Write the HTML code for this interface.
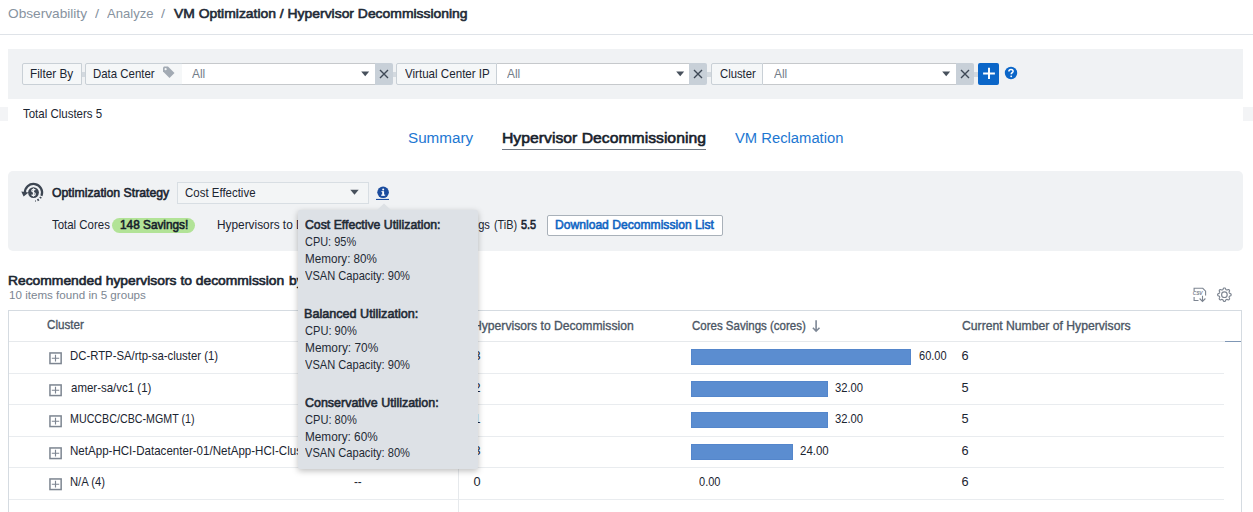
<!DOCTYPE html>
<html><head><meta charset="utf-8"><title>Hypervisor Decommissioning</title>
<style>
html,body{margin:0;padding:0;}
body{width:1253px;height:512px;overflow:hidden;position:relative;background:#fff;font-family:"Liberation Sans",sans-serif;}
.t{position:absolute;white-space:nowrap;transform-origin:0 0;}
.r{position:absolute;}
</style></head><body>
<div class="t" id="bc1" style="left:8.20px;top:5.00px;font-size:13.4px;line-height:17px;color:#8793a0;transform:scaleX(1.0206);">Observability</div>
<div class="t" style="left:95.20px;top:5.00px;font-size:13.4px;line-height:17px;color:#8793a0;transform:scaleX(1.1000);">/</div>
<div class="t" id="bc2" style="left:107.30px;top:5.00px;font-size:13.4px;line-height:17px;color:#8793a0;transform:scaleX(0.9748);">Analyze</div>
<div class="t" style="left:160.50px;top:5.00px;font-size:13.4px;line-height:17px;color:#8793a0;transform:scaleX(1.0750);">/</div>
<div class="t" id="bc3" style="left:174.00px;top:6.00px;font-size:13.2px;line-height:16px;color:#1e2a36;transform:scaleX(1.0541);-webkit-text-stroke:0.6px #1e2a36;">VM Optimization / Hypervisor Decommissioning</div>
<div class="r" style="left:0px;top:34px;width:1253px;height:1px;background:#dfe3e8;"></div>
<div class="r" style="left:8px;top:49px;width:1235px;height:50px;background:#f0f2f4;"></div>
<div class="r" style="left:22px;top:63px;width:60px;height:22px;background:#f5f7f8;border:1px solid #c9d0d6;box-sizing:border-box;border-radius:2px 0 0 2px;"></div>
<div class="t" style="left:30.11px;top:66.00px;font-size:13.2px;line-height:16px;color:#1b2531;transform:scaleX(0.8940);">Filter By</div>
<div class="r" style="left:82px;top:72px;width:3px;height:5px;background:#d3d9df;"></div>
<div class="r" style="left:85px;top:63px;width:98px;height:22px;background:#f5f7f8;border:1px solid #c9d0d6;box-sizing:border-box;border-radius:2px 0 0 2px;"></div>
<div class="t" style="left:93.43px;top:66.00px;font-size:13.2px;line-height:16px;color:#1b2531;transform:scaleX(0.8669);">Data Center</div>
<svg class="r" style="left:162px;top:66px" width="13" height="12"><path d="M1 1.5V5.5L7.5 12L12.5 7L6 0.5H2Z" fill="#a2aab3"/><circle cx="3.6" cy="3.2" r="1.1" fill="#f5f7f8"/></svg>
<div class="r" style="left:182px;top:63px;width:193px;height:22px;background:#fff;border:1px solid #c6c9cc;border-left:none;border-right:none;box-sizing:border-box;"></div>
<div class="t" style="left:192.20px;top:66.00px;font-size:13.2px;line-height:16px;color:#737d88;transform:scaleX(0.9032);">All</div>
<svg class="r" style="left:361px;top:70.6px" width="9" height="6"><path d="M0.2 0.4H8.2L4.2 5.3Z" fill="#47505c"/></svg>
<div class="r" style="left:375px;top:63px;width:18px;height:22px;background:#c8d0d8;border-radius:0 2px 2px 0;"></div>
<svg class="r" style="left:379.0px;top:69px" width="10" height="10"><path d="M1 1L9 9M9 1L1 9" stroke="#3e4856" stroke-width="1.35"/></svg>
<div class="r" style="left:393px;top:72px;width:3px;height:5px;background:#d3d9df;"></div>
<div class="r" style="left:396px;top:63px;width:101px;height:22px;background:#f5f7f8;border:1px solid #c9d0d6;box-sizing:border-box;border-radius:2px 0 0 2px;"></div>
<div class="t" style="left:404.60px;top:66.00px;font-size:13.2px;line-height:16px;color:#1b2531;transform:scaleX(0.8789);">Virtual Center IP</div>
<div class="r" style="left:497px;top:63px;width:192px;height:22px;background:#fff;border:1px solid #c6c9cc;border-left:none;border-right:none;box-sizing:border-box;"></div>
<div class="t" style="left:506.80px;top:66.00px;font-size:13.2px;line-height:16px;color:#737d88;transform:scaleX(0.9032);">All</div>
<svg class="r" style="left:676px;top:70.6px" width="9" height="6"><path d="M0.2 0.4H8.2L4.2 5.3Z" fill="#47505c"/></svg>
<div class="r" style="left:689px;top:63px;width:18px;height:22px;background:#c8d0d8;border-radius:0 2px 2px 0;"></div>
<svg class="r" style="left:693.0px;top:69px" width="10" height="10"><path d="M1 1L9 9M9 1L1 9" stroke="#3e4856" stroke-width="1.35"/></svg>
<div class="r" style="left:707px;top:72px;width:4px;height:5px;background:#d3d9df;"></div>
<div class="r" style="left:711px;top:63px;width:52px;height:22px;background:#f5f7f8;border:1px solid #c9d0d6;box-sizing:border-box;border-radius:2px 0 0 2px;"></div>
<div class="t" style="left:719.90px;top:66.00px;font-size:13.2px;line-height:16px;color:#1b2531;transform:scaleX(0.8565);">Cluster</div>
<div class="r" style="left:763px;top:63px;width:193px;height:22px;background:#fff;border:1px solid #c6c9cc;border-left:none;border-right:none;box-sizing:border-box;"></div>
<div class="t" style="left:773.60px;top:66.00px;font-size:13.2px;line-height:16px;color:#737d88;transform:scaleX(0.9032);">All</div>
<svg class="r" style="left:942px;top:70.6px" width="9" height="6"><path d="M0.2 0.4H8.2L4.2 5.3Z" fill="#47505c"/></svg>
<div class="r" style="left:956px;top:63px;width:18px;height:22px;background:#c8d0d8;border-radius:0 2px 2px 0;"></div>
<svg class="r" style="left:960.0px;top:69px" width="10" height="10"><path d="M1 1L9 9M9 1L1 9" stroke="#3e4856" stroke-width="1.35"/></svg>
<div class="r" style="left:974px;top:72px;width:4px;height:5px;background:#d3d9df;"></div>
<div class="r" style="left:978px;top:63px;width:21px;height:22px;background:#0b66c8;border-radius:2px;"></div>
<svg class="r" style="left:982px;top:67px" width="14" height="14"><path d="M7 0.8V12M1.1 6.4H12.9" stroke="#fff" stroke-width="1.95"/></svg>
<svg class="r" style="left:1004px;top:66px" width="14" height="14"><circle cx="7" cy="7" r="6.2" fill="#0b66c8"/><path d="M4.9 5.4C4.9 4.1 5.8 3.4 7 3.4C8.2 3.4 9.1 4.1 9.1 5.2C9.1 6.5 7.6 6.6 7.3 7.8V8.3" stroke="#fff" stroke-width="1.5" fill="none"/><circle cx="7.2" cy="10.3" r="0.9" fill="#fff"/></svg>
<div class="r" style="left:0px;top:107px;width:8px;height:14px;background:#f3f4f6;"></div>
<div class="r" style="left:1243px;top:107px;width:10px;height:14px;background:#f3f4f6;"></div>
<div class="t" id="tc" style="left:22.60px;top:106.00px;font-size:12.8px;line-height:16px;color:#1b2531;transform:scaleX(0.8970);">Total Clusters 5</div>
<div class="t" id="tab1" style="left:408.30px;top:128.00px;font-size:15.4px;line-height:19px;color:#1d77d2;transform:scaleX(0.9887);">Summary</div>
<div class="t" id="tab2" style="left:502.28px;top:128.00px;font-size:15.4px;line-height:19px;color:#17212b;transform:scaleX(1.0232);-webkit-text-stroke:0.6px #17212b;">Hypervisor Decommissioning</div>
<div class="r" style="left:502px;top:149px;width:204px;height:1px;background:#6f7782;"></div>
<div class="t" id="tab3" style="left:734.70px;top:128.00px;font-size:15.4px;line-height:19px;color:#1d77d2;transform:scaleX(0.9604);">VM Reclamation</div>
<div class="r" style="left:8px;top:171px;width:1235px;height:80px;background:#f0f2f4;border-radius:5px;"></div>
<svg class="r" style="left:16px;top:176px" width="34" height="32" viewBox="0 0 34 32">
<path d="M8.91 17.05A8.6 8.6 0 1 1 25.47 19.82" stroke="#3d4652" stroke-width="2.2" fill="none"/>
<path d="M24.95 20.90A8.6 8.6 0 0 1 19.29 25.01" stroke="#3d4652" stroke-width="2" stroke-dasharray="1.6 1.7" fill="none"/>
<path d="M5.3 15.6L12.6 16.4L7.6 20.6Z" fill="#3d4652"/>
<circle cx="17.5" cy="16.6" r="5.4" fill="#3d4652"/>
<path d="M19.3 14.2C18.9 13.6 18.3 13.3 17.5 13.3C16.5 13.3 15.8 13.9 15.8 14.7C15.8 16.5 19.3 15.9 19.3 18C19.3 18.9 18.5 19.6 17.5 19.6C16.7 19.6 16 19.2 15.6 18.6M17.5 12.2V20.8" stroke="#f0f2f4" stroke-width="1.2" fill="none"/>
</svg>
<div class="t" id="os" style="left:51.50px;top:185.00px;font-size:12.8px;line-height:16px;color:#1b2531;transform:scaleX(0.9582);-webkit-text-stroke:0.6px #1b2531;">Optimization Strategy</div>
<div class="r" style="left:177px;top:182px;width:192px;height:22px;background:#f3f5f6;border:1px solid #d8dee3;box-sizing:border-box;"></div>
<div class="t" id="ce" style="left:185.10px;top:185.00px;font-size:12.8px;line-height:16px;color:#1b2531;transform:scaleX(0.8957);">Cost Effective</div>
<svg class="r" style="left:350px;top:189.2px" width="10" height="7"><path d="M0.3 0.8H8.7L4.5 5.8Z" fill="#47505c"/></svg>
<svg class="r" style="left:376px;top:186px" width="14" height="16"><circle cx="7.1" cy="6.3" r="5.8" fill="#1b4c9e"/><rect x="6.2" y="5.2" width="1.9" height="4.3" fill="#fff"/><rect x="5.1" y="8.6" width="4.1" height="1.1" fill="#fff"/><rect x="5.4" y="5.2" width="1.5" height="0.9" fill="#fff"/><circle cx="7.2" cy="3.6" r="1" fill="#fff"/><rect x="0" y="12.9" width="13" height="1.1" fill="#1b4c9e"/></svg>
<div class="t" id="tcores" style="left:51.50px;top:217.00px;font-size:12.8px;line-height:16px;color:#1b2531;transform:scaleX(0.8939);">Total Cores</div>
<div class="r" style="left:112px;top:218px;width:83px;height:15px;background:#b2e397;border-radius:8px;"></div>
<div class="t" id="badge" style="left:120.00px;top:217.00px;font-size:12.8px;line-height:16px;color:#17212b;transform:scaleX(0.9233);-webkit-text-stroke:0.6px #17212b;">148 Savings!</div>
<div class="t" id="hyp" style="left:216.77px;top:217.00px;font-size:12.8px;line-height:16px;color:#1b2531;transform:scaleX(0.9261);">Hypervisors to Decommission 3</div>
<div class="t" id="msav" style="left:493.50px;top:217.00px;font-size:12.8px;line-height:16px;color:#1b2531;transform:scaleX(0.8487);">(TiB)</div>
<div class="t" style="left:407.24px;top:217.00px;font-size:12.8px;line-height:16px;color:#1b2531;transform:scaleX(0.8700);">Memory Savings</div>
<div class="t" id="v55" style="left:520.60px;top:217.00px;font-size:12.8px;line-height:16px;color:#1b2531;transform:scaleX(0.8544);-webkit-text-stroke:0.6px #1b2531;">5.5</div>
<div class="r" style="left:547px;top:215px;width:176px;height:21px;background:#fff;border:1px solid #a9b1b9;box-sizing:border-box;border-radius:2px;"></div>
<div class="t" id="dl" style="left:555.35px;top:217.00px;font-size:12.8px;line-height:16px;color:#0f64c2;transform:scaleX(0.9463);-webkit-text-stroke:0.6px #0f64c2;">Download Decommission List</div>
<div class="t" id="rec" style="left:7.73px;top:273.00px;font-size:12.9px;line-height:16px;color:#1b2631;transform:scaleX(1.0741);-webkit-text-stroke:0.6px #1b2631;">Recommended hypervisors to decommission</div>
<div class="t" style="left:288.70px;top:273.00px;font-size:12.9px;line-height:16px;color:#1b2631;transform:scaleX(1.0739);-webkit-text-stroke:0.6px #1b2631;">by cluster</div>
<div class="t" id="items" style="left:8.80px;top:288.00px;font-size:11.4px;line-height:14px;color:#7c8692;transform:scaleX(1.0197);">10 items found in 5 groups</div>
<svg class="r" style="left:1190px;top:286px" width="18" height="18" viewBox="0 0 18 18">
<path d="M4.1 5.2V2.3H12.8L15.6 5.2V9.6M4.1 11V14.5H8.5M12.5 9.8V15.3M9.6 12.5L12.5 15.4L15.4 12.5" stroke="#7d8591" stroke-width="1.1" fill="none"/>
<text x="7.6" y="8.7" font-size="4.9" font-family="Liberation Sans" font-weight="700" font-style="italic" text-anchor="middle" fill="#7d8591" letter-spacing="-0.2">CSV</text>
</svg>
<svg class="r" style="left:1216px;top:286px" width="18" height="18" viewBox="0 0 18 18">
<path d="M15.15 8.70L15.13 8.96L15.08 9.23L14.95 9.48L14.69 9.70L14.28 9.87L13.87 10.01L13.60 10.17L13.44 10.34L13.34 10.52L13.25 10.71L13.18 10.90L13.12 11.11L13.11 11.34L13.20 11.64L13.39 12.03L13.56 12.45L13.58 12.79L13.49 13.05L13.35 13.27L13.17 13.47L12.97 13.65L12.75 13.79L12.49 13.88L12.15 13.86L11.73 13.69L11.34 13.50L11.04 13.41L10.81 13.42L10.60 13.48L10.41 13.55L10.22 13.64L10.04 13.74L9.87 13.90L9.71 14.17L9.57 14.58L9.40 14.99L9.18 15.25L8.93 15.38L8.66 15.43L8.40 15.45L8.14 15.43L7.87 15.38L7.62 15.25L7.40 14.99L7.23 14.58L7.09 14.17L6.93 13.90L6.76 13.74L6.58 13.64L6.39 13.55L6.20 13.48L5.99 13.42L5.76 13.41L5.46 13.50L5.07 13.69L4.65 13.86L4.31 13.88L4.05 13.79L3.83 13.65L3.63 13.47L3.45 13.27L3.31 13.05L3.22 12.79L3.24 12.45L3.41 12.03L3.60 11.64L3.69 11.34L3.68 11.11L3.62 10.90L3.55 10.71L3.46 10.52L3.36 10.34L3.20 10.17L2.93 10.01L2.52 9.87L2.11 9.70L1.85 9.48L1.72 9.23L1.67 8.96L1.65 8.70L1.67 8.44L1.72 8.17L1.85 7.92L2.11 7.70L2.52 7.53L2.93 7.39L3.20 7.23L3.36 7.06L3.46 6.88L3.55 6.69L3.62 6.50L3.68 6.29L3.69 6.06L3.60 5.76L3.41 5.37L3.24 4.95L3.22 4.61L3.31 4.35L3.45 4.13L3.63 3.93L3.83 3.75L4.05 3.61L4.31 3.52L4.65 3.54L5.07 3.71L5.46 3.90L5.76 3.99L5.99 3.98L6.20 3.92L6.39 3.85L6.58 3.76L6.76 3.66L6.93 3.50L7.09 3.23L7.23 2.82L7.40 2.41L7.62 2.15L7.87 2.02L8.14 1.97L8.40 1.95L8.66 1.97L8.93 2.02L9.18 2.15L9.40 2.41L9.57 2.82L9.71 3.23L9.87 3.50L10.04 3.66L10.22 3.76L10.41 3.85L10.60 3.92L10.81 3.98L11.04 3.99L11.34 3.90L11.73 3.71L12.15 3.54L12.49 3.52L12.75 3.61L12.97 3.75L13.17 3.93L13.35 4.13L13.49 4.35L13.58 4.61L13.56 4.95L13.39 5.37L13.20 5.76L13.11 6.06L13.12 6.29L13.18 6.50L13.25 6.69L13.34 6.88L13.44 7.06L13.60 7.23L13.87 7.39L14.28 7.53L14.69 7.70L14.95 7.92L15.08 8.17L15.13 8.44Z" stroke="#7d8591" stroke-width="1.15" fill="none" stroke-linejoin="round"/>
<circle cx="8.4" cy="8.7" r="2.8" stroke="#7d8591" stroke-width="1.15" fill="none"/>
</svg>
<div class="r" style="left:8px;top:310px;width:1234px;height:202px;background:#fff;border:1px solid #d5dbe1;border-bottom:none;box-sizing:border-box;"></div>
<div class="r" style="left:9px;top:341px;width:1216px;height:1px;background:#e6e9ec;"></div>
<div class="r" style="left:1225px;top:341px;width:16px;height:1px;background:#7f97b5;"></div>
<div class="t" id="h1" style="left:47.40px;top:317.00px;font-size:12.8px;line-height:16px;color:#4b5664;transform:scaleX(0.9086);-webkit-text-stroke:0.35px #4b5664;">Cluster</div>
<div class="t" id="h2" style="left:472.85px;top:318.00px;font-size:12.8px;line-height:16px;color:#4b5664;transform:scaleX(0.9493);-webkit-text-stroke:0.35px #4b5664;">Hypervisors to Decommission</div>
<div class="t" id="h3" style="left:691.60px;top:318.00px;font-size:12.8px;line-height:16px;color:#4b5664;transform:scaleX(0.8985);-webkit-text-stroke:0.35px #4b5664;">Cores Savings (cores)</div>
<svg class="r" style="left:812px;top:319px" width="9" height="14"><path d="M4.1 1.2V12.2M0.9 8.8L4.1 12.2L7.5 8.8" stroke="#7d8795" stroke-width="1.6" fill="none"/></svg>
<div class="t" id="h4" style="left:961.70px;top:318.00px;font-size:12.8px;line-height:16px;color:#4b5664;transform:scaleX(0.9520);-webkit-text-stroke:0.35px #4b5664;">Current Number of Hypervisors</div>
<div class="r" style="left:9px;top:373px;width:1215px;height:1px;background:#e9ecef;"></div>
<svg class="r" style="left:49px;top:351.6px" width="13" height="13"><rect x="0.95" y="0.95" width="11.2" height="10.6" stroke="#7d8591" stroke-width="1.5" fill="none"/><path d="M6.5 2.8V9.4M2.8 6.2H10.2" stroke="#7d8591" stroke-width="1.15"/></svg>
<div class="t" style="left:70.11px;top:348.00px;font-size:12.8px;line-height:16px;color:#1b2531;transform:scaleX(0.8871);">DC-RTP-SA/rtp-sa-cluster (1)</div>
<div class="t" style="left:353.70px;top:348.00px;font-size:12.8px;line-height:16px;color:#1b2531;transform:scaleX(0.9078);">--</div>
<div class="t" style="left:473.60px;top:348.00px;font-size:12.8px;line-height:16px;color:#1b2531;">3</div>
<div class="r" style="left:691px;top:349px;width:220px;height:16px;background:#5b8dd0;border:1px solid #5486cb;box-sizing:border-box;"></div>
<div class="t" style="left:919.10px;top:348.00px;font-size:12.8px;line-height:16px;color:#1b2531;transform:scaleX(0.8619);">60.00</div>
<div class="t" style="left:961.60px;top:348.00px;font-size:12.8px;line-height:16px;color:#1b2531;">6</div>
<div class="r" style="left:9px;top:404px;width:1215px;height:1px;background:#e9ecef;"></div>
<svg class="r" style="left:49px;top:383.6px" width="13" height="13"><rect x="0.95" y="0.95" width="11.2" height="10.6" stroke="#7d8591" stroke-width="1.5" fill="none"/><path d="M6.5 2.8V9.4M2.8 6.2H10.2" stroke="#7d8591" stroke-width="1.15"/></svg>
<div class="t" style="left:71.00px;top:380.00px;font-size:12.8px;line-height:16px;color:#1b2531;transform:scaleX(0.8966);">amer-sa/vc1 (1)</div>
<div class="t" style="left:353.70px;top:380.00px;font-size:12.8px;line-height:16px;color:#1b2531;transform:scaleX(0.9078);">--</div>
<div class="t" style="left:473.60px;top:380.00px;font-size:12.8px;line-height:16px;color:#1b2531;">2</div>
<div class="r" style="left:691px;top:381px;width:137px;height:16px;background:#5b8dd0;border:1px solid #5486cb;box-sizing:border-box;"></div>
<div class="t" style="left:835.00px;top:380.00px;font-size:12.8px;line-height:16px;color:#1b2531;transform:scaleX(0.8776);">32.00</div>
<div class="t" style="left:961.60px;top:380.00px;font-size:12.8px;line-height:16px;color:#1b2531;">5</div>
<div class="r" style="left:9px;top:436px;width:1215px;height:1px;background:#e9ecef;"></div>
<svg class="r" style="left:49px;top:414.6px" width="13" height="13"><rect x="0.95" y="0.95" width="11.2" height="10.6" stroke="#7d8591" stroke-width="1.5" fill="none"/><path d="M6.5 2.8V9.4M2.8 6.2H10.2" stroke="#7d8591" stroke-width="1.15"/></svg>
<div class="t" style="left:70.16px;top:411.00px;font-size:12.8px;line-height:16px;color:#1b2531;transform:scaleX(0.8357);">MUCCBC/CBC-MGMT (1)</div>
<div class="t" style="left:353.70px;top:411.00px;font-size:12.8px;line-height:16px;color:#1b2531;transform:scaleX(0.9078);">--</div>
<div class="t" style="left:473.60px;top:411.00px;font-size:12.8px;line-height:16px;color:#1b2531;">1</div>
<div class="r" style="left:691px;top:412px;width:137px;height:16px;background:#5b8dd0;border:1px solid #5486cb;box-sizing:border-box;"></div>
<div class="t" style="left:835.00px;top:411.00px;font-size:12.8px;line-height:16px;color:#1b2531;transform:scaleX(0.8776);">32.00</div>
<div class="t" style="left:961.60px;top:411.00px;font-size:12.8px;line-height:16px;color:#1b2531;">5</div>
<div class="r" style="left:9px;top:467px;width:1215px;height:1px;background:#e9ecef;"></div>
<svg class="r" style="left:49px;top:446.6px" width="13" height="13"><rect x="0.95" y="0.95" width="11.2" height="10.6" stroke="#7d8591" stroke-width="1.5" fill="none"/><path d="M6.5 2.8V9.4M2.8 6.2H10.2" stroke="#7d8591" stroke-width="1.15"/></svg>
<div class="t" style="left:70.10px;top:443.00px;font-size:12.8px;line-height:16px;color:#1b2531;transform:scaleX(0.9036);">NetApp-HCI-Datacenter-01/NetApp-HCI-Cluster-01 (1)</div>
<div class="t" style="left:353.70px;top:443.00px;font-size:12.8px;line-height:16px;color:#1b2531;transform:scaleX(0.9078);">--</div>
<div class="t" style="left:473.60px;top:443.00px;font-size:12.8px;line-height:16px;color:#1b2531;">3</div>
<div class="r" style="left:691px;top:444px;width:102px;height:16px;background:#5b8dd0;border:1px solid #5486cb;box-sizing:border-box;"></div>
<div class="t" style="left:800.40px;top:443.00px;font-size:12.8px;line-height:16px;color:#1b2531;transform:scaleX(0.8964);">24.00</div>
<div class="t" style="left:961.60px;top:443.00px;font-size:12.8px;line-height:16px;color:#1b2531;">6</div>
<div class="r" style="left:9px;top:499px;width:1215px;height:1px;background:#e9ecef;"></div>
<svg class="r" style="left:49px;top:477.6px" width="13" height="13"><rect x="0.95" y="0.95" width="11.2" height="10.6" stroke="#7d8591" stroke-width="1.5" fill="none"/><path d="M6.5 2.8V9.4M2.8 6.2H10.2" stroke="#7d8591" stroke-width="1.15"/></svg>
<div class="t" style="left:70.12px;top:474.00px;font-size:12.8px;line-height:16px;color:#1b2531;transform:scaleX(0.8786);">N/A (4)</div>
<div class="t" style="left:353.70px;top:474.00px;font-size:12.8px;line-height:16px;color:#1b2531;transform:scaleX(0.9078);">--</div>
<div class="t" style="left:473.60px;top:474.00px;font-size:12.8px;line-height:16px;color:#1b2531;">0</div>
<div class="t" style="left:698.60px;top:474.00px;font-size:12.8px;line-height:16px;color:#1b2531;transform:scaleX(0.8633);">0.00</div>
<div class="t" style="left:961.60px;top:474.00px;font-size:12.8px;line-height:16px;color:#1b2531;">6</div>
<div class="r" style="left:458px;top:342px;width:1px;height:170px;background:#e6e9ec;"></div>
<div class="r" style="left:298px;top:210px;width:179.6px;height:259px;background:#dde1e6;box-shadow:0 2px 6px rgba(0,0,0,0.26);border-radius:2px;"></div>
<svg class="r" style="left:376px;top:203px" width="16" height="8"><path d="M0 8L8 0.5L16 8Z" fill="#dde1e5"/></svg>
<div class="t" style="left:305.00px;top:217.00px;font-size:12.8px;line-height:16px;color:#1f2a35;transform:scaleX(0.9585);-webkit-text-stroke:0.6px #1f2a35;">Cost Effective Utilization:</div>
<div class="t" style="left:305.00px;top:234.00px;font-size:12.8px;line-height:16px;color:#1f2a35;transform:scaleX(0.8557);">CPU: 95%</div>
<div class="t" style="left:304.69px;top:251.00px;font-size:12.8px;line-height:16px;color:#1f2a35;transform:scaleX(0.9116);">Memory: 80%</div>
<div class="t" style="left:305.00px;top:268.00px;font-size:12.8px;line-height:16px;color:#1f2a35;transform:scaleX(0.8678);">VSAN Capacity: 90%</div>
<div class="t" style="left:304.01px;top:306.00px;font-size:12.8px;line-height:16px;color:#1f2a35;transform:scaleX(0.9852);-webkit-text-stroke:0.6px #1f2a35;">Balanced Utilization:</div>
<div class="t" style="left:305.00px;top:323.00px;font-size:12.8px;line-height:16px;color:#1f2a35;transform:scaleX(0.8659);">CPU: 90%</div>
<div class="t" style="left:304.67px;top:340.00px;font-size:12.8px;line-height:16px;color:#1f2a35;transform:scaleX(0.9270);">Memory: 70%</div>
<div class="t" style="left:305.00px;top:356.50px;font-size:12.8px;line-height:16px;color:#1f2a35;transform:scaleX(0.8678);">VSAN Capacity: 90%</div>
<div class="t" style="left:305.00px;top:395.00px;font-size:12.8px;line-height:16px;color:#1f2a35;transform:scaleX(0.9736);-webkit-text-stroke:0.6px #1f2a35;">Conservative Utilization:</div>
<div class="t" style="left:305.00px;top:412.00px;font-size:12.8px;line-height:16px;color:#1f2a35;transform:scaleX(0.8659);">CPU: 80%</div>
<div class="t" style="left:304.68px;top:428.50px;font-size:12.8px;line-height:16px;color:#1f2a35;transform:scaleX(0.9206);">Memory: 60%</div>
<div class="t" style="left:305.00px;top:444.50px;font-size:12.8px;line-height:16px;color:#1f2a35;transform:scaleX(0.8678);">VSAN Capacity: 80%</div>
</body></html>
